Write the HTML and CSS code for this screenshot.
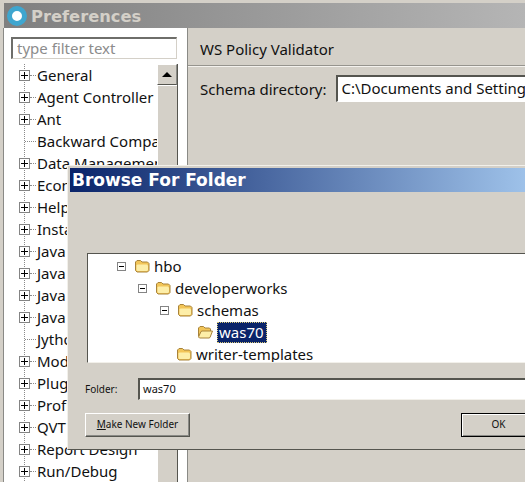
FILE: index.html
```html
<!DOCTYPE html>
<html lang="en">
<head>
    <meta charset="UTF-8">
    <meta name="viewport" content="width=device-width, initial-scale=1.0">
    <title>Preferences</title>
    <link rel="stylesheet" href="styles.css">
</head>
<body>
    <svg class="svg-defs" width="0" height="0">
        <symbol id="folder" viewBox="0 0 16 14">
            <path d="M1.5 11.5V3L3 1.5h3.5L8 3h5.5L15 4.5v7L13.5 13h-10.5z" fill="#f2c558" stroke="#a8833a"/>
            <path d="M2.5 6.5l1-1h9.5l1 1v4.5l-1 1H3.5l-1-1z" fill="#fdeea8"/>
        </symbol>
        <symbol id="folder-open" viewBox="0 0 16 14">
            <path d="M1.5 11V3L3 1.5h3.5L8 3h4.5l1 1v2" fill="#f2c558" stroke="#a8833a"/>
            <path d="M1.5 12L4 6.5l1-.5h10.5L13 12.5l-1 .5H2.5z" fill="#fdeea8" stroke="#a8833a"/>
        </symbol>
    </svg>

    <div class="window">
        <div class="titlebar">
            <span class="app-icon"></span>
            <span class="titlebar-text">Preferences</span>
        </div>
        <div class="window-body">
            <div class="sidebar">
                <input class="filter" type="text" placeholder="type filter text">
                <div class="tree-pane">
                    <div class="tree">
                        <div class="row"><i class="exp"></i><i class="stub"></i>General</div>
                        <div class="row"><i class="exp"></i><i class="stub"></i>Agent Controller</div>
                        <div class="row"><i class="exp"></i><i class="stub"></i>Ant</div>
                        <div class="row leaf"><i class="stub"></i>Backward Compatibility</div>
                        <div class="row"><i class="exp"></i><i class="stub"></i>Data Management</div>
                        <div class="row"><i class="exp"></i><i class="stub"></i>Econ</div>
                        <div class="row"><i class="exp"></i><i class="stub"></i>Help</div>
                        <div class="row"><i class="exp"></i><i class="stub"></i>Install</div>
                        <div class="row"><i class="exp"></i><i class="stub"></i>Java</div>
                        <div class="row"><i class="exp"></i><i class="stub"></i>Java</div>
                        <div class="row"><i class="exp"></i><i class="stub"></i>Java</div>
                        <div class="row"><i class="exp"></i><i class="stub"></i>Java</div>
                        <div class="row leaf"><i class="stub"></i>Jython</div>
                        <div class="row"><i class="exp"></i><i class="stub"></i>Model</div>
                        <div class="row"><i class="exp"></i><i class="stub"></i>Plug-in</div>
                        <div class="row"><i class="exp"></i><i class="stub"></i>Profile</div>
                        <div class="row"><i class="exp"></i><i class="stub"></i>QVT</div>
                        <div class="row"><i class="exp"></i><i class="stub"></i>Report Design</div>
                        <div class="row"><i class="exp"></i><i class="stub"></i>Run/Debug</div>
                    </div>
                    <div class="scrollbar">
                        <div class="scroll-btn"><span class="arrow-up"></span></div>
                        <div class="scroll-thumb"></div>
                    </div>
                </div>
            </div>
            <div class="content">
                <div class="content-head">WS Policy Validator</div>
                <div class="field">
                    <label class="field-label">Schema directory:</label>
                    <div class="path-box">C:\Documents and Settings\hbo\developerworks\schemas\was70</div>
                </div>
            </div>
        </div>
    </div>

    <div class="dialog">
        <div class="dialog-title">Browse For Folder</div>
        <div class="dialog-body">
            <div class="folder-tree">
                <div class="f-row lvl1"><i class="f-exp"></i><svg class="f-icon"><use href="#folder"/></svg><span>hbo</span></div>
                <div class="f-row lvl2"><i class="f-exp"></i><svg class="f-icon"><use href="#folder"/></svg><span>developerworks</span></div>
                <div class="f-row lvl3"><i class="f-exp"></i><svg class="f-icon"><use href="#folder"/></svg><span>schemas</span></div>
                <div class="f-row lvl4"><svg class="f-icon"><use href="#folder-open"/></svg><span class="selected">was70</span></div>
                <div class="f-row lvl5"><svg class="f-icon"><use href="#folder"/></svg><span>writer-templates</span></div>
            </div>
            <div class="folder-field">
                <label class="folder-label">Folder:</label>
                <div class="folder-input">was70</div>
            </div>
            <div class="dialog-buttons">
                <button class="btn btn-new"><u>M</u>ake New Folder</button>
                <button class="btn btn-ok">OK</button>
            </div>
        </div>
    </div>
</body>
</html>
```

FILE: styles.css
```css
html, body {
    margin: 0;
    padding: 0;
    height: 482px;
    overflow: hidden;
}
body {
    position: relative;
    background-color: #d4d0c8;
    font-family: "Noto Sans", "Liberation Sans", sans-serif;
    color: #111;
}
.svg-defs {
    display: block;
    height: 0;
}
.window {
    padding-top: 3px;
}
.titlebar {
    height: 25px;
    margin-left: 4px;
    display: flex;
    align-items: center;
    background: linear-gradient(90deg, #7f7f7f, #b5b5b5);
}
.app-icon {
    box-sizing: border-box;
    width: 20px;
    height: 20px;
    margin-left: 3px;
    border-radius: 50%;
    background: #fff;
    border: 5px solid #3fa6cf;
}
.titlebar-text {
    margin-left: 4px;
    padding-top: 2px;
    font-family: "DejaVu Sans", sans-serif;
    font-weight: bold;
    font-size: 16.3px;
    color: #d4d0c8;
}
.window-body {
    display: flex;
    height: 454px;
}
.sidebar {
    flex: none;
    width: 185px;
    box-sizing: border-box;
    margin-left: 3px;
    border-left: 1px solid #8a8a86;
    border-right: 1px solid #8a8a86;
    background: #fff;
    padding: 9px 0 0 7px;
}
.filter {
    display: block;
    box-sizing: border-box;
    width: 166px;
    height: 22px;
    padding: 0 4px 2px;
    border: 1px solid #fff;
    border-top: 2px solid #6e6e6a;
    border-left: 2px solid #6e6e6a;
    border-right-color: #d4d0c8;
    border-bottom-color: #d4d0c8;
    font: 15px "Noto Sans", sans-serif;
    background: #fff;
}
.filter::placeholder {
    color: #8c8c8c;
    opacity: 1;
}
.tree-pane {
    display: flex;
    margin-top: 5px;
    margin-left: -7px;
}
.tree {
    width: 153px;
    flex: none;
    overflow: hidden;
    white-space: nowrap;
    font-size: 15px;
    background-image: linear-gradient(#8a8a8a 50%, transparent 50%);
    background-size: 1px 2px;
    background-position: 20px 0;
    background-repeat: repeat-y;
}
.row {
    display: flex;
    align-items: center;
    height: 22px;
    padding-left: 15px;
}
.exp {
    flex: none;
    box-sizing: border-box;
    width: 11px;
    height: 11px;
    border: 1px solid #848484;
    background:
        linear-gradient(#000, #000) center / 7px 1px no-repeat,
        linear-gradient(#000, #000) center / 1px 7px no-repeat,
        #fff;
}
.stub {
    flex: none;
    width: 6px;
    height: 0;
    margin-right: 1px;
    border-top: 1px dotted #8a8a8a;
}
.row.leaf {
    padding-left: 21px;
}
.row.leaf .stub {
    width: 11px;
}
.scrollbar {
    flex: none;
    width: 20px;
    border-right: 1px solid #55554f;
    background: #d4d0c8;
}
.scroll-btn {
    height: 21px;
    display: flex;
    align-items: center;
    justify-content: center;
    box-sizing: border-box;
    border: 1px solid;
    border-color: #fff #8a8a86 #55554f #fff;
}
.arrow-up {
    width: 0;
    height: 0;
    border-left: 5px solid transparent;
    border-right: 5px solid transparent;
    border-bottom: 5px solid #000;
}
.scroll-thumb {
    height: 400px;
    border-top: 1px solid #fff;
    border-left: 1px solid #fff;
}
.content {
    flex: 1;
    min-width: 0;
    overflow: hidden;
}
.content-head {
    height: 38px;
    padding: 8px 0 0 12px;
    box-sizing: border-box;
    font-size: 15px;
    line-height: 26px;
    border-bottom: 1px solid #96948e;
    box-shadow: 0 1px 0 #f4f2ee;
}
.field {
    display: flex;
    align-items: center;
    margin-top: 9px;
    padding-left: 12px;
    white-space: nowrap;
    font-size: 15px;
}
.field-label {
    margin-right: 9px;
}
.path-box {
    flex: none;
    height: 24px;
    line-height: 23px;
    padding: 0 4px;
    border: 1px solid #fff;
    border-top: 2px solid #55554f;
    border-left: 2px solid #55554f;
    background: #fff;
}
.dialog {
    position: absolute;
    left: 67px;
    top: 165px;
    width: 620px;
    height: 285px;
    box-sizing: border-box;
    padding: 2px 0 0 2px;
    border-top: 1px solid #f2f0ea;
    border-left: 1px solid #f2f0ea;
    border-bottom: 1px solid #55554f;
    background: #d4d0c8;
}
.dialog-title {
    height: 24px;
    padding-left: 2px;
    line-height: 25px;
    font-family: "DejaVu Sans", sans-serif;
    font-weight: bold;
    font-size: 17px;
    color: #fff;
    background: linear-gradient(90deg, #0a246a, #a6caf0 480px);
}
.dialog-body {
    padding: 61px 0 0 17px;
}
.folder-tree {
    height: 110px;
    box-sizing: border-box;
    padding-top: 1px;
    overflow: hidden;
    border: 1px solid #f2f0ea;
    border-top: 1px solid #55554f;
    border-left: 1px solid #55554f;
    border-right: 0;
    background: #fff;
    font-size: 15px;
    white-space: nowrap;
}
.f-row {
    display: flex;
    align-items: center;
    height: 22px;
}
.lvl1 { padding-left: 29px; }
.lvl2 { padding-left: 50px; }
.lvl3 { padding-left: 72px; }
.lvl4 { padding-left: 109px; }
.lvl5 { padding-left: 88px; }
.f-exp {
    position: relative;
    flex: none;
    box-sizing: border-box;
    width: 9px;
    height: 9px;
    margin-right: 8px;
    border: 1px solid #848484;
}
.f-exp::after {
    content: "";
    position: absolute;
    left: 1px;
    top: 3px;
    width: 5px;
    height: 1px;
    background: #000;
}
.f-icon {
    flex: none;
    width: 16px;
    height: 14px;
    margin-right: 4px;
}
.selected {
    margin-left: 0;
    padding: 0 3px 0 2px;
    line-height: 21px;
    background: #0a246a;
    color: #fff;
    outline: 1px dotted #d8c878;
    outline-offset: -1px;
}
.folder-field {
    display: flex;
    align-items: center;
    margin-top: 15px;
    margin-left: -2px;
    font-size: 10px;
}
.folder-label {
    width: 53px;
}
.folder-input {
    flex: 1;
    height: 22px;
    box-sizing: border-box;
    padding: 0 3px;
    line-height: 18px;
    font-size: 11px;
    border: 1px solid #f2f0ea;
    border-top: 2px solid #55554f;
    border-left: 2px solid #55554f;
    border-right: 0;
    background: #fff;
}
.dialog-buttons {
    display: flex;
    margin-top: 13px;
    margin-left: -2px;
}
.btn {
    height: 24px;
    padding: 0 0 2px;
    font: 10px "Noto Sans", sans-serif;
    color: #111;
    background: #d4d0c8;
    border: 1px solid;
    border-color: #fff #55554f #55554f #fff;
    box-shadow: inset -1px -1px 0 #8a8a86;
}
.btn-new {
    width: 105px;
}
.btn-ok {
    width: 75px;
    margin-left: 271px;
    border: 1px solid #000;
    box-shadow: inset 1px 1px 0 #fff, inset -1px -1px 0 #8a8a86;
}
```
